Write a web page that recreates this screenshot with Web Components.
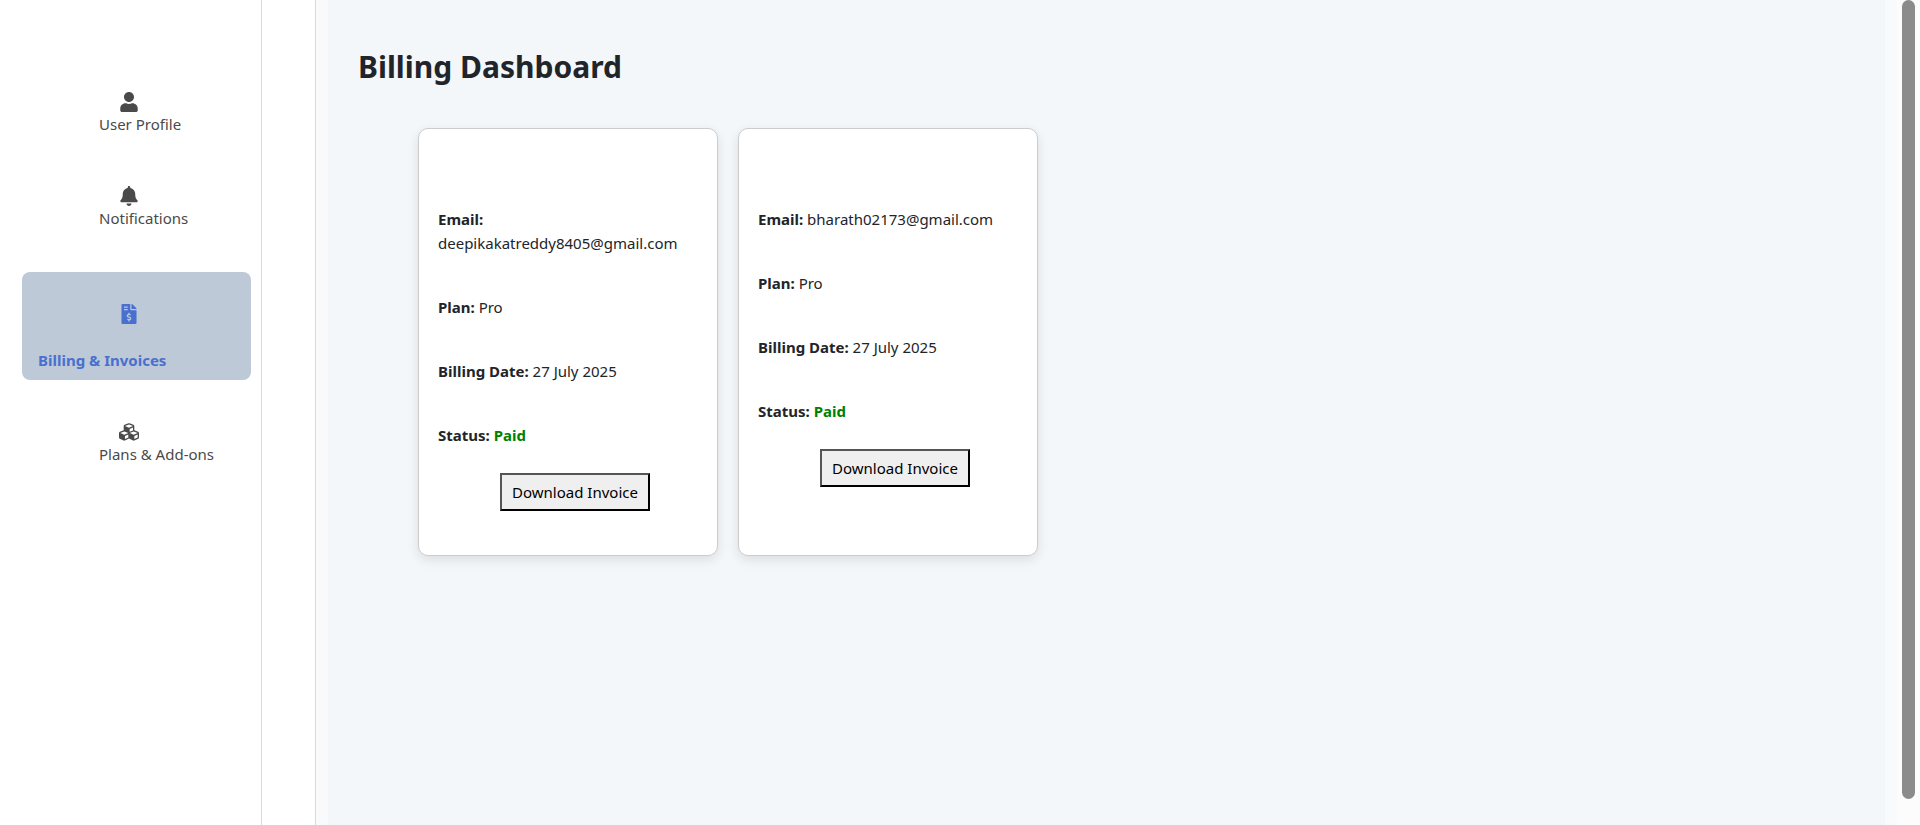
<!DOCTYPE html>
<html lang="en">
<head>
<meta charset="utf-8">
<meta name="viewport" content="width=device-width, initial-scale=1">
<title>Billing Dashboard</title>
<style>
  html, body { margin: 0; height: 100%; }
  body {
    font: 15px/24px "Noto Sans", "Open Sans", sans-serif;
    color: #212529;
    background: #fff;
    overflow: hidden;
  }
</style>
</head>
<body>
<app-shell>
  <side-nav slot="nav">
    <nav-item icon="user">User Profile</nav-item>
    <nav-item icon="bell">Notifications</nav-item>
    <nav-item icon="invoice" active>Billing &amp; Invoices</nav-item>
    <nav-item icon="cubes">Plans &amp; Add-ons</nav-item>
  </side-nav>
  <billing-page heading="Billing Dashboard">
    <invoice-card email="deepikakatreddy8405@gmail.com" plan="Pro" date="27 July 2025" status="Paid"></invoice-card>
    <invoice-card email="bharath02173@gmail.com" plan="Pro" date="27 July 2025" status="Paid"></invoice-card>
  </billing-page>
</app-shell>

<script>
const ICONS = {
  user: [448, 'M224 256c70.7 0 128-57.3 128-128S294.7 0 224 0 96 57.3 96 128s57.3 128 128 128zm89.6 32h-16.7c-22.2 10.2-46.9 16-72.9 16s-50.6-5.8-72.9-16h-16.7C60.2 288 0 348.2 0 422.4V464c0 26.5 21.5 48 48 48h352c26.5 0 48-21.5 48-48v-41.6c0-74.2-60.2-134.4-134.4-134.4z'],
  bell: [448, 'M224 512c35.32 0 63.97-28.65 63.97-64H160.03c0 35.35 28.65 64 63.97 64zm215.39-149.71c-19.32-20.76-55.47-51.99-55.47-154.29 0-77.7-54.48-139.9-127.94-155.16V32c0-17.67-14.32-32-31.98-32s-31.98 14.33-31.98 32v20.84C118.56 68.1 64.08 130.3 64.08 208c0 102.3-36.15 133.53-55.47 154.29-6 6.45-8.66 14.16-8.61 21.71.11 16.4 12.98 32 32.1 32h383.8c19.12 0 32-15.6 32.1-32 .05-7.55-2.61-15.27-8.61-21.71z'],
  invoice: [384, 'M377 105L279.1 7c-4.5-4.5-10.6-7-17-7H256v128h128v-6.1c0-6.3-2.5-12.4-7-16.9zm-153 31V0H24C10.7 0 0 10.7 0 24v464c0 13.3 10.7 24 24 24h336c13.3 0 24-10.7 24-24V160H248c-13.2 0-24-10.8-24-24zM64 72c0-4.42 3.58-8 8-8h80c4.42 0 8 3.58 8 8v16c0 4.42-3.58 8-8 8H72c-4.42 0-8-3.58-8-8V72zm0 80v-16c0-4.42 3.58-8 8-8h80c4.42 0 8 3.58 8 8v16c0 4.42-3.58 8-8 8H72c-4.42 0-8-3.58-8-8zm144 263.88V440c0 4.42-3.58 8-8 8h-16c-4.42 0-8-3.58-8-8v-24.29c-11.29-.58-22.27-4.52-31.37-11.35-3.9-2.93-4.1-8.77-.57-12.14l11.75-11.21c2.77-2.64 6.89-2.76 10.13-.73 3.87 2.42 8.26 3.72 12.82 3.72h28.11c6.5 0 11.8-5.92 11.8-13.19 0-5.95-3.61-11.19-8.77-12.73l-45-13.5c-18.59-5.58-31.58-23.42-31.58-43.39 0-24.52 19.05-44.44 42.67-45.07V232c0-4.42 3.58-8 8-8h16c4.42 0 8 3.58 8 8v24.29c11.29.58 22.27 4.51 31.37 11.35 3.9 2.93 4.1 8.77.57 12.14l-11.75 11.21c-2.77 2.64-6.89 2.76-10.13.73-3.87-2.43-8.26-3.72-12.82-3.72h-28.11c-6.5 0-11.8 5.92-11.8 13.19 0 5.95 3.61 11.19 8.77 12.73l45 13.5c18.59 5.58 31.58 23.42 31.58 43.39 0 24.53-19.05 44.44-42.67 45.07z'],
  cubes: [512, 'M488.6 250.2L392 214V105.5c0-15-9.3-28.4-23.4-33.7l-100-37.5c-8.1-3.1-17.1-3.1-25.3 0l-100 37.5c-14.1 5.3-23.4 18.7-23.4 33.7V214l-96.6 36.2C9.3 255.5 0 268.9 0 283.9V394c0 13.6 7.7 26.1 19.9 32.2l100 50c10.1 5.1 22.1 5.1 32.2 0l103.9-52 103.9 52c10.1 5.1 22.1 5.1 32.2 0l100-50c12.2-6.1 19.9-18.6 19.9-32.2V283.9c0-15-9.3-28.4-23.4-33.7zM358 214.8l-85 31.9v-68.2l85-37v73.3zM154 104.1l102-38.2 102 38.2v.6l-102 41.4-102-41.4v-.6zm84 291.1l-85 42.5v-79.1l85-38.8v75.4zm0-112l-102 41.4-102-41.4v-.6l102-38.2 102 38.2v.6zm240 112l-85 42.5v-79.1l85-38.8v75.4zm0-112l-102 41.4-102-41.4v-.6l102-38.2 102 38.2v.6z']
};

function define(name, render) {
  customElements.define(name, class extends HTMLElement {
    connectedCallback() {
      if (this.shadowRoot) return;
      const template = document.createElement('template');
      template.innerHTML = render(this);
      this.attachShadow({ mode: 'open' }).append(template.content.cloneNode(true));
    }
  });
}

define('app-shell', () => `
  <style>
    :host { display: flex; min-height: 100vh; }
    .gutter { flex: none; width: 53px; border-right: 1px solid #d8dadc; }
    main { flex: 1; min-width: 0; display: flex; padding: 0 12px; background: #f8fafc; }
    .track { flex: none; width: 23px; background: #fcfcfc; box-sizing: border-box; padding: 0 5px 26px; display: flex; }
    .thumb { flex: 1; border-radius: 7px; background: #8b8b8b; }
  </style>
  <slot name="nav"></slot>
  <div class="gutter"></div>
  <main><slot></slot></main>
  <div class="track" aria-hidden="true"><div class="thumb"></div></div>`);

define('side-nav', () => `
  <style>
    :host { display: block; flex: none; width: 262px; box-sizing: border-box; border-right: 1px solid #d8dadc; }
    nav { display: flex; flex-direction: column; gap: 34px; padding: 84px 10px 0 22px; }
  </style>
  <nav aria-label="Account"><slot></slot></nav>`);

define('nav-item', el => {
  const [w, d] = ICONS[el.getAttribute('icon')];
  return `
  <style>
    :host { display: block; }
    a { display: flex; flex-direction: column; padding: 8px 16px; border-radius: 8px; color: #4a4a4a; text-decoration: none; }
    svg { display: block; width: 20px; height: 20px; margin-left: 81px; fill: currentColor; }
    span { padding-left: 61px; }
    :host([active]) a { background: #bdc9d7; color: #4970cf; font-weight: 700; }
    :host([active]) svg { margin-top: 24px; margin-bottom: 24px; }
    :host([active]) span { padding-left: 0; }
  </style>
  <a href="#"${el.hasAttribute('active') ? ' aria-current="page"' : ''}>
    <svg viewBox="0 0 ${w} 512" aria-hidden="true"><path d="${d}"/></svg>
    <span><slot></slot></span>
  </a>`;
});

define('billing-page', el => `
  <style>
    :host { display: block; flex: 1; min-width: 0; padding: 48px 30px; background: #f3f7fa; }
    h1 { margin: 0 0 42px; font-size: 30px; line-height: 38px; font-weight: 700; }
    .cards { display: flex; flex-wrap: wrap; gap: 20px; padding-left: 60px; }
  </style>
  <h1>${el.getAttribute('heading')}</h1>
  <div class="cards"><slot></slot></div>`);

define('invoice-card', el => `
  <style>
    :host {
      display: block; box-sizing: border-box; width: 300px; padding: 78px 19px 44px;
      border: 1px solid #ccc; border-radius: 10px; background: #fff;
      box-shadow: 0 4px 12px rgba(0, 0, 0, .1);
    }
    p { margin: 0 0 40px; }
    p:last-of-type { margin-bottom: 26px; }
    .status { color: #008000; }
    button {
      display: block; min-width: 150px; height: 38px; margin-left: 62px; padding: 0 8px;
      border: 2px solid; border-color: #555 #000 #000 #555;
      background: #efefef; color: #000; font: inherit;
    }
  </style>
  <p><strong>Email:</strong> ${el.getAttribute('email')}</p>
  <p><strong>Plan:</strong> ${el.getAttribute('plan')}</p>
  <p><strong>Billing Date:</strong> ${el.getAttribute('date')}</p>
  <p><strong>Status:</strong> <strong class="status">${el.getAttribute('status')}</strong></p>
  <button type="button">Download Invoice</button>`);
</script>
</body>
</html>
